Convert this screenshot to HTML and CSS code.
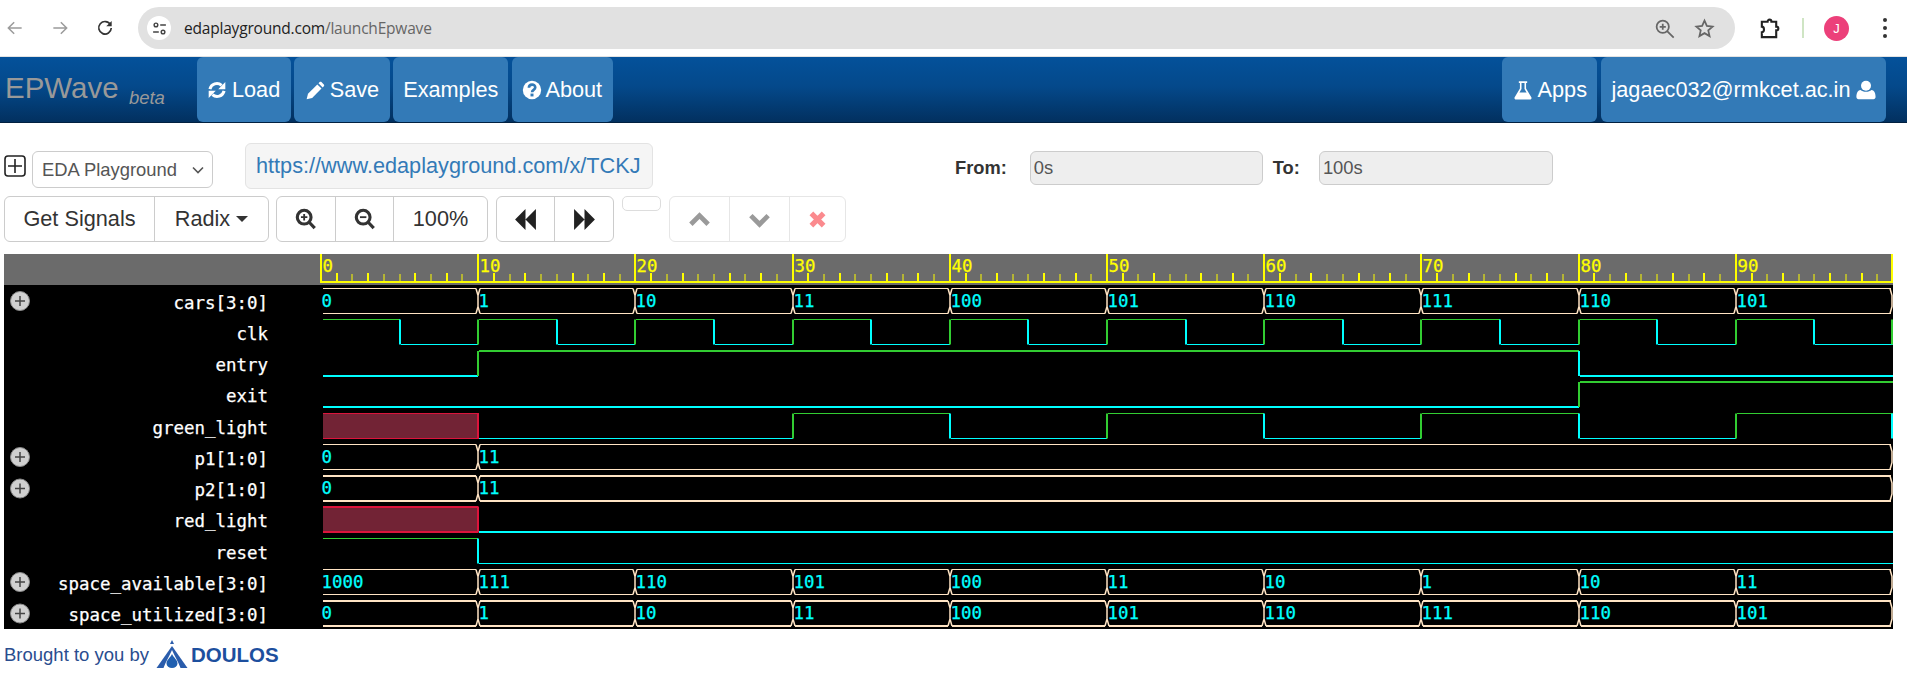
FILE: index.html
```html
<!DOCTYPE html>
<html lang="en">
<head>
    <meta charset="UTF-8">
    <title>EPWave</title>
    <link rel="stylesheet" href="styles.css">
</head>
<body>
    <!-- browser bar -->
    <div class="chrome">
        <svg class="chrome-icon nav-back" viewBox="0 0 24 24"><path d="M20 12H5M11 5l-7 7 7 7"/></svg>
        <svg class="chrome-icon nav-fwd" viewBox="0 0 24 24"><path d="M4 12h15M13 5l7 7-7 7"/></svg>
        <svg class="chrome-icon nav-reload" viewBox="0 0 24 24"><path d="M18.5 8A7.5 7.5 0 1 0 19.5 12"/><path class="solid" d="M20 3.5v6.5h-6.5z"/></svg>
        <div class="omnibox">
            <span class="site-badge">
                <svg viewBox="0 0 24 24" class="tune"><circle cx="7" cy="7" r="2.6"/><path d="M13 7h8M3 17h8"/><circle cx="17" cy="17" r="2.6"/></svg>
            </span>
            <span class="url"><span class="url-host">edaplayground.com</span>/launchEpwave</span>
            <svg class="omni-icon omni-zoom" viewBox="0 0 24 24"><circle cx="10" cy="10" r="7"/><path d="M15 15l7.5 7.5M6.5 10h7M10 6.5v7"/></svg>
            <svg class="omni-icon omni-star" viewBox="0 0 24 24"><path d="M12 3l2.7 6.1 6.6.7-5 4.4 1.5 6.5-5.8-3.4-5.8 3.4 1.5-6.5-5-4.4 6.6-.7z"/></svg>
        </div>
        <svg class="chrome-icon ext" viewBox="0 0 24 24"><path d="M4 5h6c0-3 4-3 4 0h5v5c3 0 3 4 0 4v7H4v-5c3 0 3-6 0-6z"/></svg>
        <span class="chrome-sep"></span>
        <span class="avatar">J</span>
        <span class="dots"><i></i><i></i><i></i></span>
    </div>

    <!-- site navbar -->
    <nav class="navbar">
        <div class="brand">EPWave <small>beta</small></div>
        <a class="nav-btn">
            <svg class="fa" viewBox="0 0 24 24"><path class="arc" d="M3.5 11A8.5 8.5 0 0 1 17.5 6.5"/><path d="M22 2.5v8.5h-8.5z"/><path class="arc" d="M20.5 13A8.5 8.5 0 0 1 6.5 17.5"/><path d="M2 21.5V13h8.500z"/></svg>
            Load
        </a>
        <a class="nav-btn">
            <svg class="fa" viewBox="0 0 24 24"><path d="M2 23l1.600-6.500L14.800 5.300l5 5L8.600 21.500z"/><path d="M16.200 3.900l1.400-1.400c.6-.6 1.500-.6 2.100 0l2.900 2.900c.6.6.6 1.500 0 2.100l-1.400 1.400z"/></svg>
            Save
        </a>
        <a class="nav-btn btn-examples">Examples</a>
        <a class="nav-btn btn-about">
            <svg class="fa" viewBox="0 0 24 24"><circle cx="12" cy="12" r="11"/><path class="hole" d="M8.300 9.300c0-5 7.600-5 7.600-.3 0 3-3.800 2.700-3.800 5.600"/><rect class="hole-dot" x="10.200" y="16.300" width="3.600" height="3.400"/></svg>
            About
        </a>
        <span class="nav-space"></span>
        <a class="nav-btn">
            <svg class="fa" viewBox="0 0 24 24"><path d="M7 1.500h10v2h-1.300v6.800L22 20.600c.8 1.300-.1 2.900-1.600 2.900H3.600c-1.500 0-2.400-1.600-1.600-2.900L8.300 10.300V3.500H7zM10.200 3.500v7.400L7.700 15h8.600l-2.500-4.100V3.500z" fill-rule="evenodd"/></svg>
            Apps
        </a>
        <a class="nav-btn">
            jagaec032@rmkcet.ac.in
            <svg class="fa" viewBox="0 0 24 24"><circle cx="12" cy="7" r="6"/><path d="M3 23c-1.500 0-2.500-1-2.500-2.500 0-4 1-8 5-8.500 1.500 1.400 3.700 2.200 6.500 2.200s5-.8 6.500-2.200c4 .5 5 4.500 5 8.500 0 1.500-1 2.500-2.500 2.500z"/></svg>
        </a>
    </nav>

    <!-- controls -->
    <div class="tool-row">
        <svg class="plus-box" viewBox="0 0 22 22"><rect x="1" y="1" width="20" height="20" rx="3"/><path d="M11 4v14M4 11h14"/></svg>
        <div class="select-box">EDA Playground
            <svg class="chev" viewBox="0 0 12 8"><path d="M1 1.500l5 5 5-5"/></svg>
        </div>
        <div class="share-url">https://www.edaplayground.com/x/TCKJ</div>
        <label class="range-label from-label">From:</label>
        <div class="range-input from-input">0s</div>
        <label class="range-label to-label">To:</label>
        <div class="range-input to-input">100s</div>
    </div>

    <div class="tool-row second">
        <div class="btn-group">
            <button class="btn btn-signals">Get Signals</button>
            <button class="btn btn-radix">Radix <span class="caret"></span></button>
        </div>
        <div class="btn-group">
            <button class="btn btn-icon">
                <svg class="ico" viewBox="0 0 24 24"><circle cx="10" cy="10" r="7.500"/><path d="M15.500 15.500l6 6.500"/><path class="thin" d="M6.500 10h7M10 6.500v7"/></svg>
            </button>
            <button class="btn btn-icon btn-out">
                <svg class="ico" viewBox="0 0 24 24"><circle cx="10" cy="10" r="7.500"/><path d="M15.500 15.500l6 6.500"/><path class="thin" d="M6.500 10h7"/></svg>
            </button>
            <button class="btn btn-pct">100%</button>
        </div>
        <div class="btn-group">
            <button class="btn btn-icon btn-step">
                <svg class="ico-solid" viewBox="0 0 24 24"><path d="M12 2v20L2 12zM22 2v20L12 12z"/></svg>
            </button>
            <button class="btn btn-icon btn-step">
                <svg class="ico-solid" viewBox="0 0 24 24"><path d="M2 2v20l10-10zM12 2v20l10-10z"/></svg>
            </button>
        </div>
        <button class="btn-empty"></button>
        <div class="btn-group disabled">
            <button class="btn btn-arrow">
                <svg class="ico-arrow" viewBox="0 0 24 24"><path d="M3 17l9-9 9 9"/></svg>
            </button>
            <button class="btn btn-arrow">
                <svg class="ico-arrow" viewBox="0 0 24 24"><path d="M3 8l9 9 9-9"/></svg>
            </button>
            <button class="btn btn-arrow btn-close">
                <svg class="ico-close" viewBox="0 0 24 24"><path d="M5 5l14 14M19 5L5 19"/></svg>
            </button>
        </div>
    </div>

    <!-- waveform, coordinates in the viewBox are page pixels -->
    <svg id="wave" class="wave" viewBox="4 254 1889 375" width="1889" height="375"></svg>

    <div class="footer">
        <span>Brought to you by</span>
        <svg class="doulos-mark" viewBox="0 0 32 28">
            <path class="mark-a" d="M16 0l2 4h-4z"/>
            <path class="mark-a" d="M16 6L0.500 28H31.500z"/>
            <path class="mark-w" d="M7.500 28C10 21 13 17 16 10c3 7 6 11 8.500 18z"/>
            <path class="mark-b" d="M16 14c-2 4-5.500 6-5.500 9.500a5.500 4.500 0 0 0 11 0c0-3.500-3.500-5.500-5.500-9.500z"/>
        </svg>
        <span class="doulos-name">DOULOS</span>
    </div>

    <script src="wave.js"></script>
</body>
</html>
```

FILE: styles.css
```css
/* page */
html, body {
    margin: 0;
    padding: 0;
    height: 676px;
    overflow: hidden;
    background: #ffffff;
    font-family: "Liberation Sans", Arial, sans-serif;
    color: #333;
}

/* browser bar */
.chrome {
    display: flex;
    align-items: center;
    height: 56px;
    border-bottom: 1px solid #e3e3e3;
    box-sizing: content-box;
    padding-left: 5px;
}

.chrome-icon {
    width: 20px;
    height: 20px;
    fill: none;
    stroke: #9b9b9b;
    stroke-width: 1.800;
}

.nav-fwd {
    margin-left: 25px;
}

.nav-reload {
    margin-left: 25px;
    stroke: #333;
    stroke-width: 2;
}

.nav-reload .solid {
    fill: #333;
    stroke: none;
}

.omnibox {
    display: flex;
    align-items: center;
    width: 1597px;
    height: 42px;
    margin-left: 23px;
    background: #e1e1e1;
    border-radius: 21px;
    box-sizing: border-box;
    padding-left: 9px;
}

.site-badge {
    display: flex;
    align-items: center;
    justify-content: center;
    width: 24px;
    height: 24px;
    background: #fff;
    border-radius: 50%;
}

.tune {
    width: 17px;
    height: 17px;
    fill: none;
    stroke: #444;
    stroke-width: 2;
}

.url {
    margin-left: 13px;
    font-family: "Open Sans", sans-serif;
    font-size: 15.500px;
    color: #666;
    letter-spacing: -0.200px;
}

.url-host {
    color: #222;
}

.omni-icon {
    width: 21px;
    height: 21px;
    fill: none;
    stroke: #666;
    stroke-width: 2;
}

.omni-zoom {
    margin-left: auto;
}

.omni-star {
    margin-left: 19px;
    margin-right: 20px;
}

.ext {
    margin-left: 23px;
    width: 23px;
    height: 23px;
    stroke: #222;
    stroke-width: 2.200;
}

.chrome-sep {
    width: 2px;
    height: 20px;
    margin-left: 21px;
    background: #cfe5c4;
}

.avatar {
    display: flex;
    align-items: center;
    justify-content: center;
    width: 25px;
    height: 25px;
    margin-left: 20px;
    border-radius: 50%;
    background: #ec407a;
    color: #fff;
    font-size: 13px;
}

.dots {
    display: flex;
    flex-direction: column;
    gap: 4px;
    margin-left: 34px;
}

.dots i {
    width: 4px;
    height: 4px;
    border-radius: 50%;
    background: #333;
}

/* navbar */
.navbar {
    display: flex;
    gap: 3.500px;
    height: 66px;
    background: linear-gradient(to bottom, #04519a 0%, #04498b 45%, #02305f 100%);
    border-bottom: 1px solid #012040;
    box-sizing: border-box;
    padding-right: 21px;
}

.brand {
    width: 193px;
    padding: 14px 0 0 5px;
    box-sizing: border-box;
    font-size: 29.500px;
    color: #999;
}

.brand small {
    font-size: 18.500px;
    font-style: italic;
    margin-left: 2px;
    vertical-align: -6px;
}

.nav-btn {
    display: flex;
    align-items: center;
    gap: 5px;
    height: 65px;
    padding: 0 10.500px;
    background: #337ab7;
    border-radius: 6px;
    color: #fff;
    font-size: 21.700px;
    box-sizing: border-box;
}

.btn-examples {
    padding: 0 10px;
}

.btn-about {
    gap: 3px;
}

.nav-space {
    flex: 1;
}

.fa {
    width: 20px;
    height: 20px;
    fill: #fff;
}

.fa .arc {
    fill: none;
    stroke: #fff;
    stroke-width: 3.600;
}

.fa .hole {
    fill: none;
    stroke: #337ab7;
    stroke-width: 3.200;
}

.fa .hole-dot {
    fill: #337ab7;
}

/* control rows */
.tool-row {
    display: flex;
    align-items: flex-start;
    padding: 20px 0 0 4px;
    box-sizing: content-box;
    height: 46px;
}

.tool-row.second {
    padding-top: 7px;
}

.plus-box {
    width: 22px;
    height: 22px;
    margin-top: 12px;
    fill: none;
    stroke: #222;
    stroke-width: 1.600;
}

.select-box {
    display: flex;
    align-items: center;
    width: 181px;
    height: 37px;
    margin: 8px 0 0 6px;
    padding-left: 9px;
    box-sizing: border-box;
    background: #fff;
    border: 1px solid #ccc;
    border-radius: 6px;
    color: #555;
    font-size: 18.400px;
}

.chev {
    width: 12px;
    height: 8px;
    margin-left: 15px;
    fill: none;
    stroke: #555;
    stroke-width: 1.600;
}

.share-url {
    width: 408px;
    height: 46px;
    margin-left: 32px;
    padding-left: 10px;
    box-sizing: border-box;
    background: #f5f5f5;
    border: 1px solid #e3e3e3;
    border-radius: 6px;
    color: #337ab7;
    font-size: 21.700px;
    line-height: 43px;
    white-space: nowrap;
}

.range-label {
    font-weight: bold;
    font-size: 18.300px;
    margin-top: 14px;
}

.from-label {
    margin-left: 302px;
}

.to-label {
    margin-left: 10px;
}

.range-input {
    width: 233px;
    height: 34px;
    margin-top: 8px;
    padding-left: 3px;
    box-sizing: border-box;
    background: #eee;
    border: 1px solid #ccc;
    border-radius: 6px;
    color: #555;
    font-size: 18.400px;
    line-height: 32px;
}

.from-input {
    margin-left: 23px;
}

.to-input {
    width: 234px;
    margin-left: 19px;
}

.btn-group {
    display: flex;
    height: 46px;
    margin-right: 8px;
    border: 1px solid #ccc;
    border-radius: 6px;
    box-sizing: border-box;
    background: #fff;
}

.btn-group:first-child {
    margin-right: 7px;
}

.btn-group.disabled {
    border-color: #e6e6e6;
    margin-left: 8px;
}

.btn {
    display: flex;
    align-items: center;
    justify-content: center;
    height: 100%;
    padding: 0;
    background: none;
    border: none;
    border-right: 1px solid #ccc;
    color: #333;
    font-family: inherit;
    font-size: 21.700px;
}

.btn:last-child {
    border-right: none;
}

.btn-signals { width: 150px; }
.btn-radix { width: 113px; gap: 6px; }
.btn-icon { width: 59px; }
.btn-out { width: 58px; }
.btn-pct { width: 93px; }
.btn-step { width: 58px; }
.btn-arrow { width: 60px; border-color: #e6e6e6; }
.btn-close { width: 55px; }

.caret {
    width: 0;
    height: 0;
    border-left: 6px solid transparent;
    border-right: 6px solid transparent;
    border-top: 6px solid #333;
}

.ico {
    width: 22px;
    height: 22px;
    fill: none;
    stroke: #333;
    stroke-width: 3.400;
}

.ico .thin {
    stroke-width: 2;
}

.ico-solid {
    width: 25px;
    height: 25px;
    fill: #222;
}

.ico-arrow {
    width: 23px;
    height: 23px;
    fill: none;
    stroke: #9a9a9a;
    stroke-width: 5;
}

.ico-close {
    width: 21px;
    height: 21px;
    fill: none;
    stroke: #fb8a8e;
    stroke-width: 6;
}

.btn-empty {
    width: 39px;
    height: 15px;
    padding: 0;
    background: #fff;
    border: 1px solid #ddd;
    border-radius: 5px;
    margin-left: 0;
}

/* waveform */
.wave {
    display: block;
    margin: 12px 0 0 4px;
    background: #000;
}

.wave text {
    font-family: "DejaVu Sans Mono", monospace;
    font-size: 17.400px;
    stroke-width: 0.250px;
}

.ruler-bg { fill: #6b6b6b; }
.ruler-line { stroke: #ffff00; fill: none; }
.wave .ruler-text { fill: #ffff00; stroke: #ffff00; }
.wave .sig-name { fill: #ffffff; stroke: #ffffff; text-anchor: end; font-size: 17.450px; }
.bus { stroke: #ffe4c4; fill: none; }
.wave .bus-val { fill: #00ffff; stroke: #00ffff; }
.hi { stroke: #32cd32; fill: none; }
.lo { stroke: #00ffff; fill: none; }
.unknown { fill: #722335; stroke: none; }
.unknown-edge { stroke: #dc143c; fill: none; }
.exp-dot { fill: #d0d0d0; stroke: #8a8a8a; stroke-width: 1; }
.exp-plus { stroke: #444; stroke-width: 1.500; fill: none; }

/* footer */
.footer {
    display: flex;
    align-items: center;
    height: 47px;
    padding: 4px 0 0 4px;
    box-sizing: border-box;
    font-size: 18.500px;
    color: #2a4d8f;
}

.doulos-mark {
    width: 32px;
    height: 28px;
    margin-left: 7px;
    margin-bottom: 2px;
}

.mark-a { fill: #2a5cab; }
.mark-w { fill: #ffffff; }
.mark-b { fill: #1f5fb0; }

.doulos-name {
    margin-left: 3px;
    font-size: 20.500px;
    font-weight: bold;
    color: #1d4f9e;
}
```

FILE: wave.js
```js
// waveform drawing
var svg = document.getElementById('wave');
var NS = 'http://www.w3.org/2000/svg';

function el(name, attrs, text) {
    var node = document.createElementNS(NS, name);
    for (var k in attrs) node.setAttribute(k, attrs[k]);
    if (text !== undefined) node.textContent = text;
    svg.appendChild(node);
    return node;
}

function tx(t) {
    return Math.round(321 + 15.72 * t);
}

// top line of each row and its stroke width
var rows = [
    { name: 'cars[3:0]', y: 288.5, w: 1, bus: ['0', '1', '10', '11', '100', '101', '110', '111', '110', '101'] },
    { name: 'clk', y: 319.5, w: 1, bits: [[0, 1], [5, 0], [10, 1], [15, 0], [20, 1], [25, 0], [30, 1], [35, 0], [40, 1], [45, 0], [50, 1], [55, 0], [60, 1], [65, 0], [70, 1], [75, 0], [80, 1], [85, 0], [90, 1], [95, 0], [100, 1]] },
    { name: 'entry', y: 351, w: 2, bits: [[0, 0], [10, 1], [80, 0]] },
    { name: 'exit', y: 382, w: 2, bits: [[0, 0], [80, 1]] },
    { name: 'green_light', y: 413.5, w: 1, unknown: true, bits: [[10, 0], [30, 1], [40, 0], [50, 1], [60, 0], [70, 1], [80, 0], [90, 1], [100, 0]] },
    { name: 'p1[1:0]', y: 444.5, w: 1, bus: ['0', '11'], ends: [0, 10, 100] },
    { name: 'p2[1:0]', y: 476, w: 2, bus: ['0', '11'], ends: [0, 10, 100] },
    { name: 'red_light', y: 507, w: 2, unknown: true, bits: [[10, 0]] },
    { name: 'reset', y: 538.5, w: 1, bits: [[0, 1], [10, 0]] },
    { name: 'space_available[3:0]', y: 569.5, w: 1, bus: ['1000', '111', '110', '101', '100', '11', '10', '1', '10', '11'] },
    { name: 'space_utilized[3:0]', y: 601, w: 2, bus: ['0', '1', '10', '11', '100', '101', '110', '111', '110', '101'] }
];

// ruler
el('rect', { 'class': 'ruler-bg', x: 4, y: 254, width: 1889, height: 31 });
el('path', { 'class': 'ruler-line', d: 'M320 282H1893', 'stroke-width': 2 });
for (var t = 0; t <= 100; t++) {
    var x = tx(t);
    if (t % 10 === 0) {
        var mx = t === 100 ? x - 1 : x;
        el('path', { 'class': 'ruler-line', d: 'M' + mx + ' 254V282', 'stroke-width': 2 });
        if (t < 100) el('text', { 'class': 'ruler-text', x: x + 1.5, y: 272 }, String(t));
    } else {
        var thick = [1, 3, 6, 8].indexOf(t % 10) >= 0;
        el('path', { 'class': 'ruler-line', d: 'M' + x + ' ' + (thick ? 273 : 274) + 'V282', 'stroke-width': thick ? 2 : 1 });
    }
}

function drawBus(r) {
    var top = r.y, bot = r.y + 25;
    var times = r.ends || [0, 10, 20, 30, 40, 50, 60, 70, 80, 90, 100];
    for (var i = 0; i < r.bus.length; i++) {
        var a = tx(times[i]), b = tx(times[i + 1]);
        var d = 'M' + (a + 2) + ' ' + top + 'H' + (b - 2) + 'M' + (a + 2) + ' ' + bot + 'H' + (b - 2);
        el('path', { 'class': 'bus', d: d, 'stroke-width': r.w });
        el('text', { 'class': 'bus-val', x: a + 0.5, y: r.y + 18 }, r.bus[i]);
    }
    // crossings between values
    for (var j = 1; j < times.length; j++) {
        var c = tx(times[j]);
        if (j === times.length - 1) c = c - 1;
        var cross = 'M' + (c - 2) + ' ' + top + 'L' + c + ' ' + (top + 7) + 'V' + (bot - 7) + 'L' + (c - 2) + ' ' + bot;
        if (j < times.length - 1) {
            cross += 'M' + (c + 2) + ' ' + top + 'L' + c + ' ' + (top + 7) + 'V' + (bot - 7) + 'L' + (c + 2) + ' ' + bot;
        }
        el('path', { 'class': 'bus', d: cross, 'stroke-width': 1.5 });
    }
}

function drawBits(r) {
    var top = r.y, bot = r.y + 25;
    var bits = r.bits;
    for (var i = 0; i < bits.length; i++) {
        var a = tx(bits[i][0]);
        var v = bits[i][1];
        var b = i + 1 < bits.length ? tx(bits[i + 1][0]) : tx(100);
        // edge into this value, the one leaving an unknown stretch is drawn red
        if (i > 0) {
            el('path', { 'class': v ? 'hi' : 'lo', d: 'M' + (a === tx(100) ? a - 1 : a) + ' ' + top + 'V' + bot, 'stroke-width': 2 });
        }
        if (b > a) {
            var yy = v ? top : bot;
            var from = bits[i][0] === 0 ? 323 : a + 1;
            el('path', { 'class': v ? 'hi' : 'lo', d: 'M' + from + ' ' + yy + 'H' + b, 'stroke-width': r.w });
        }
    }
}

rows.forEach(function (r) {
    el('text', { 'class': 'sig-name', x: 268, y: r.y + 20 }, r.name);
    if (r.bus) {
        drawBus(r);
        el('circle', { 'class': 'exp-dot', cx: 20, cy: r.y + 12.5, r: 9.5 });
        el('path', { 'class': 'exp-plus', d: 'M20 ' + (r.y + 7.5) + 'v10M15 ' + (r.y + 12.5) + 'h10' });
    } else {
        if (r.unknown) {
            var end = tx(10);
            el('rect', { 'class': 'unknown', x: 323, y: r.y, width: end - 323, height: 25 });
            el('path', { 'class': 'unknown-edge', d: 'M323 ' + r.y + 'H' + end + 'M323 ' + (r.y + 25) + 'H' + end, 'stroke-width': r.w });
            el('path', { 'class': 'unknown-edge', d: 'M' + end + ' ' + (r.y - 0.5) + 'V' + (r.y + 25.5), 'stroke-width': 2 });
        }
        drawBits(r);
    }
});
```
